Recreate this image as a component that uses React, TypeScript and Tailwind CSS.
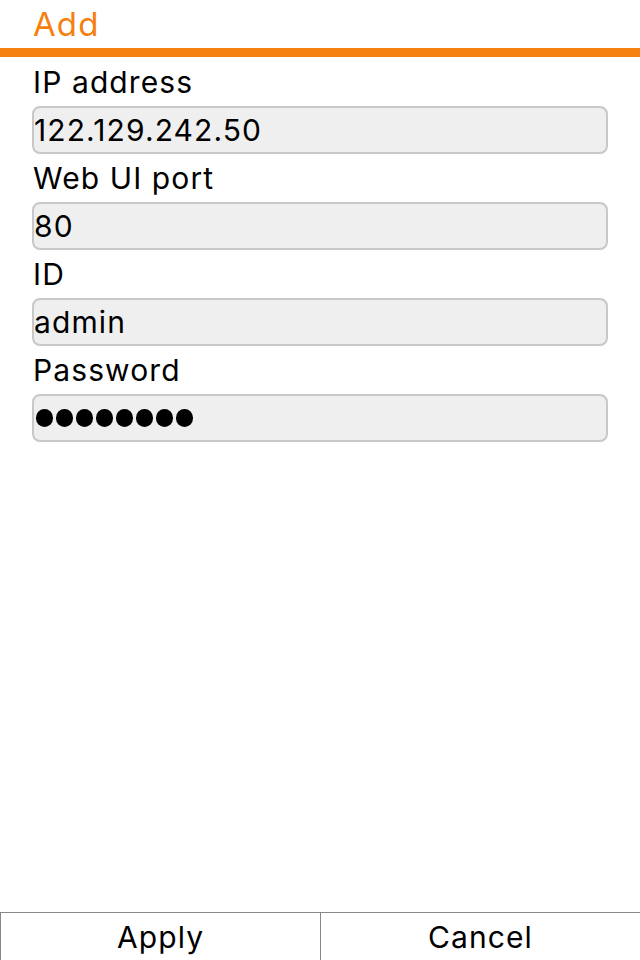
import { useState } from "react";

type Field = { label: string; value: string; secret?: boolean };

const FIELDS: Field[] = [
  { label: "IP address", value: "122.129.242.50" },
  { label: "Web UI port", value: "80" },
  { label: "ID", value: "admin" },
  { label: "Password", value: "12345678", secret: true },
];

function PasswordDots({ count }: { count: number }) {
  return (
    <div className="flex items-center gap-[3px] pl-[2px]">
      {Array.from({ length: count }).map((_, i) => (
        <span key={i} className="block w-[17px] h-[18px] rounded-full bg-black" />
      ))}
    </div>
  );
}

export default function App() {
  const [values] = useState(FIELDS);

  return (
    <div
      className="w-[640px] h-[960px] bg-white flex flex-col text-black tracking-[1.1px]"
      style={{ fontFamily: "Inter, 'Liberation Sans', sans-serif" }}
    >
      <div className="h-[48px] px-[33px] flex items-center">
        <span className="text-[33px] leading-none text-[#f57f0f]">Add</span>
      </div>
      <div className="h-[9px] bg-[#f57f0f]" />

      <div className="flex flex-col px-[32px] pt-[1px]">
        {values.map((f) => (
          <div key={f.label} className="flex flex-col">
            <div className="h-[48px] flex items-center px-[1px] text-[30px] leading-none">
              {f.label}
            </div>
            <div className="h-[48px] rounded-[8px] border-2 border-[#c8c8c8] bg-[#efefef] flex items-center">
              {f.secret ? (
                <PasswordDots count={f.value.length} />
              ) : (
                <span className="text-[30px] leading-none">{f.value}</span>
              )}
            </div>
          </div>
        ))}
      </div>

      <div className="flex-1" />

      <div className="h-[48px] flex border-t border-[#888888]">
        <button className="flex-1 border-l border-[#888888] text-[30px] leading-none tracking-[1.1px]">Apply</button>
        <button className="flex-1 border-l border-[#888888] text-[30px] leading-none tracking-[1.1px]">Cancel</button>
      </div>
    </div>
  );
}
